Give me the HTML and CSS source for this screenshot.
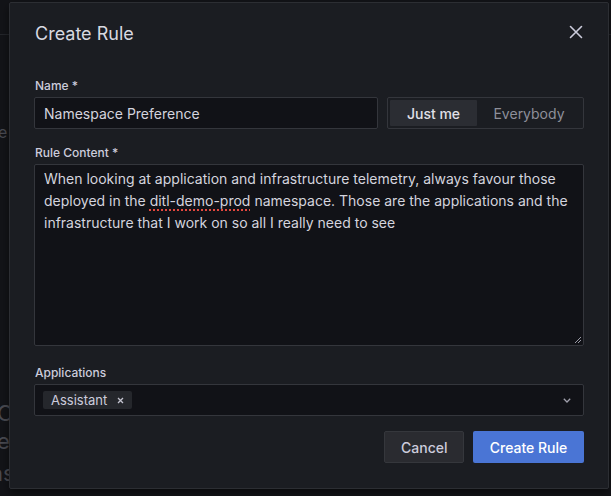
FILE: index.html
```html
<!DOCTYPE html>
<html>
<head>
<meta charset="utf-8">
<link rel="stylesheet" href="styles.css">
</head>
<body>
<div class="page">
  <div class="page-top"></div>
  <div class="page-frag frag-1">e</div>
  <div class="page-frag frag-2">C</div>
  <div class="page-frag frag-3">e</div>
  <div class="page-frag frag-4">ns</div>
</div>
<div class="modal">
  <div class="modal-header">
    <h2 class="modal-title">Create Rule</h2>
    <button class="close" aria-label="Close">
      <svg width="14" height="14" viewBox="0 0 14 14"><path d="M1.5 1.5 L12.5 12.5 M12.5 1.5 L1.5 12.5" stroke="#ccccdc" stroke-width="1.6" stroke-linecap="round"/></svg>
    </button>
  </div>
  <div class="modal-body">
    <div class="field">
      <label class="label">Name *</label>
      <div class="row">
        <div class="input">Namespace Preference</div>
        <div class="radio-group">
          <span class="radio active">Just me</span>
          <span class="radio">Everybody</span>
        </div>
      </div>
    </div>
    <div class="field field-content">
      <label class="label">Rule Content *</label>
      <div class="textarea">When looking at application and infrastructure telemetry, always favour those deployed in the <span class="spell">ditl-demo-prod</span> namespace. Those are the applications and the infrastructure that I work on so all I really need to see<svg class="grip" width="8" height="8" viewBox="0 0 8 8"><path d="M7 1 L1 7 M7 4 L4 7" stroke="#9a9aa6" stroke-width="1"/></svg></div>
    </div>
    <div class="field">
      <label class="label">Applications</label>
      <div class="select">
        <span class="tag">Assistant<svg class="tag-x" width="7" height="7" viewBox="0 0 7 7"><path d="M1 1 L6 6 M6 1 L1 6" stroke="#c4c4d0" stroke-width="1.3"/></svg></span>
        <svg class="chevron" width="8" height="5" viewBox="0 0 8 5"><path d="M0.8 0.8 L4 4 L7.2 0.8" stroke="#a0a0ac" stroke-width="1.3" fill="none"/></svg>
      </div>
    </div>
    <div class="actions">
      <button class="btn secondary">Cancel</button>
      <button class="btn primary">Create Rule</button>
    </div>
  </div>
</div>
</body>
</html>
```
FILE: styles.css
```css
* { box-sizing: border-box; }
html, body { margin: 0; padding: 0; }
body {
  width: 611px;
  height: 496px;
  overflow: hidden;
  background: #131418;
  font-family: Inter, "Noto Sans", sans-serif;
  color: #ccccdc;
  position: relative;
}
.page { position: relative; width: 100%; height: 100%; }
.page-top { height: 35px; border-bottom: 1px solid #24262b; }
.page-frag {
  position: absolute;
  left: -3px;
  color: #4a4b52;
  font-size: 20px;
}
.frag-1 { top: 122px; font-size: 16px; left: -2px; }
.frag-2 { top: 400px; font-size: 22px; }
.frag-3 { top: 428px; font-size: 22px; }
.frag-4 { top: 460px; font-size: 22px; left: -10px; }

.modal {
  position: absolute;
  left: 9px;
  top: 2px;
  width: 600px;
  height: 487px;
  background: #1b1d22;
  border: 1px solid #2c2e33;
  border-radius: 2px;
  box-shadow: 0 4px 10px rgba(0,0,0,0.5);
}
.modal-header {
  display: flex;
  align-items: center;
  justify-content: space-between;
  height: 60px;
  padding: 0 25px 0 25px;
}
.modal-title {
  margin: 0;
  font-size: 18px;
  font-weight: 400;
  color: #d8d9e0;
}
.close {
  background: none;
  border: 0;
  padding: 0;
  width: 14px;
  height: 14px;
  display: flex;
  cursor: pointer;
  margin-bottom: 2px;
}
.modal-body { padding: 14px 24px 0 24px; }
.field { display: flex; flex-direction: column; margin-bottom: 15px; }
.field-content { margin-bottom: 18px; }
.label {
  font-size: 12px;
  font-weight: 500;
  line-height: 18px;
  color: #ccccdc;
  margin-bottom: 2px;
  padding-left: 1px;
}
.row { display: flex; gap: 9px; }
.input {
  flex: 1;
  height: 32px;
  background: #111217;
  border: 1px solid #34363c;
  border-radius: 2px;
  padding: 0 9px;
  display: flex;
  align-items: center;
  font-size: 14px;
  color: #d4d4de;
}
.radio-group {
  width: 197px;
  height: 32px;
  border: 1px solid #34363c;
  border-radius: 2px;
  padding: 2px;
  display: flex;
}
.radio {
  display: flex;
  align-items: center;
  justify-content: center;
  font-size: 14px;
  color: #8e8f9a;
}
.radio.active {
  width: 87px;
  background: #2b2d33;
  color: #e0e0e8;
  font-weight: 500;
  border-radius: 1px;
}
.radio:not(.active) { flex: 1; }
.textarea {
  position: relative;
  height: 182px;
  background: #111217;
  border: 1px solid #34363c;
  border-radius: 2px;
  padding: 3px 9px;
  font-size: 14px;
  line-height: 22px;
  color: #d4d4de;
}
.spell {
  text-decoration: underline dotted #e5483f;
  text-underline-offset: 3px;
  text-decoration-thickness: 1.5px;
}
.grip { position: absolute; right: 1px; bottom: 1px; }
.select {
  position: relative;
  height: 32px;
  background: #111217;
  border: 1px solid #34363c;
  border-radius: 2px;
  padding: 0 0 0 8px;
  display: flex;
  align-items: center;
  justify-content: space-between;
}
.tag {
  background: #25272c;
  border-radius: 2px;
  height: 18px;
  padding: 0 8px 0 8px;
  display: flex;
  align-items: center;
  font-size: 13px;
  color: #ccccdc;
}
.tag-x { margin-left: 10px; }
.chevron { margin-right: 12px; }
.actions {
  display: flex;
  justify-content: flex-end;
  gap: 9px;
  margin-top: 2px;
}
.btn {
  height: 32px;
  border-radius: 2px;
  font-family: Inter, "Noto Sans", sans-serif;
  font-size: 14px;
  font-weight: 500;
  padding: 0 16px;
  cursor: pointer;
}
.btn.secondary {
  width: 80px;
  background: #2a2b30;
  border: 1px solid #35373c;
  color: #ccccdc;
}
.btn.primary {
  width: 111px;
  background: #4a75d5;
  border: 0;
  color: #ffffff;
}
```
